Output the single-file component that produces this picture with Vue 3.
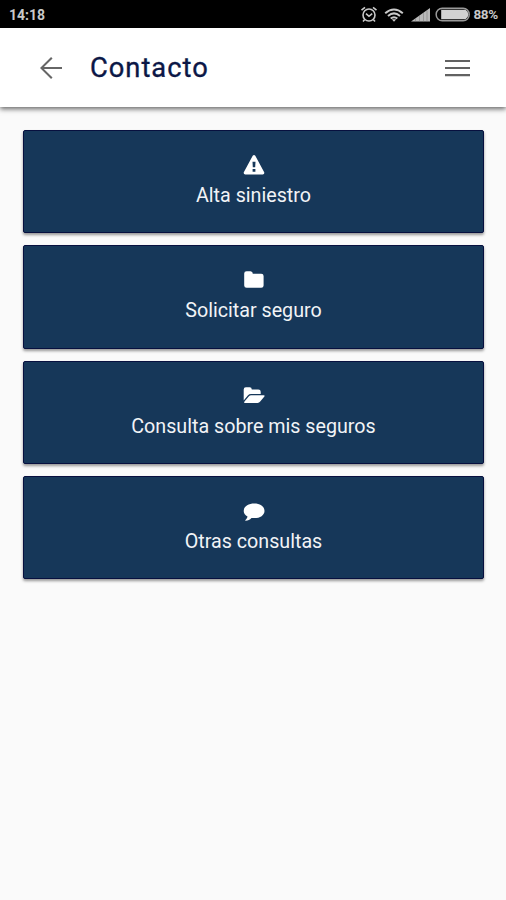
<template>
  <div class="screen">
    <div class="status-bar">
      <span class="clock">14:18</span>
      <div class="status-icons">
        <svg class="alarm" viewBox="0 0 18 18" fill="none" stroke="#c9c9c9" stroke-width="1.6">
          <circle cx="9" cy="9" r="6" />
          <path d="M1.5 4.2 5 1.3M16.5 4.2 13 1.3M6 7.7l3 2.6 3.2-2.6M4.7 13.5l-1.7 2M13.3 13.5l1.7 2" />
        </svg>
        <svg class="wifi" viewBox="0 0 20 14" fill="none" stroke="#c9c9c9" stroke-width="2">
          <path d="M1.2 5.2Q10-2.2 18.8 5.2M4 8Q10 2.8 16 8M6.7 10.6Q10 7.8 13.3 10.6" />
          <path d="M7.8 11.2h4.4L10 13.7z" fill="#c9c9c9" stroke="none" />
        </svg>
        <svg class="signal" viewBox="0 0 20 14">
          <path d="M0 13.5 19 0v13.5z" fill="#b9b9b9" />
          <path d="M4.5 10.5v3M8.5 8v5.5M12.5 5v8.5M16 2.5v11" stroke="#777" stroke-width=".5" />
        </svg>
        <svg class="battery" viewBox="0 0 36 15">
          <rect x="1.2" y="1.2" width="33" height="12.6" rx="6" fill="none" stroke="#999" stroke-width="1.5" />
          <path d="M6.2 2.8h24.3q2.8 1.5 2.8 4.7T30.5 12.2H6.2z" fill="#d2d2d2" />
        </svg>
        <span class="percent">88%</span>
      </div>
    </div>

    <header class="toolbar">
      <svg class="back" viewBox="0 0 22 22" fill="none" stroke="#666" stroke-width="2.1">
        <path d="M22 11H1.8M11.8 .8 1.4 11l10.4 10.2" />
      </svg>
      <h1>Contacto</h1>
      <svg class="menu" viewBox="0 0 25 18" stroke="#626262" stroke-width="2.2">
        <path d="M0 2h25M0 9h25M0 16.2h25" />
      </svg>
    </header>

    <main class="options">
      <button v-for="option in options" :key="option.label" class="option">
        <svg class="option-icon" viewBox="0 0 22 20" fill="#fff" fill-rule="evenodd">
          <path v-for="d in option.paths" :key="d" :d="d" />
        </svg>
        <span>{{ option.label }}</span>
      </button>
    </main>
  </div>
</template>

<script setup>
const options = [
  {
    label: 'Alta siniestro',
    paths: [
      'M9.7.8Q11-.6 12.3.8L21.2 17.2Q21.8 19.3 19.7 19.4H2.3Q.2 19.3.8 17.2ZM9.5 6.8 9.8 12.3H12.2L12.5 6.8ZM9.6 14V16.7H12.4V14Z',
    ],
  },
  {
    label: 'Solicitar seguro',
    paths: [
      'M1.2 3.6Q1.2 1.2 3.6 1.2H7.5Q9.8 1.2 9.8 3.7H18.2Q20.6 3.7 20.6 6.1V15.4Q20.6 17.8 18.2 17.8H3.6Q1.2 17.8 1.2 15.4Z',
    ],
  },
  {
    label: 'Consulta sobre mis seguros',
    paths: [
      'M.7 3.5Q.7 1.3 2.9 1.3H6.7Q8.7 1.3 8.8 3.4H15.3Q17.7 3.4 17.7 5.7V8.1H8.1Q6.1 8.1 4.8 9.5L.7 14.4Z',
      'M8.2 9.2H20.5Q22.3 9.2 21.4 10.6L17.2 15.6Q16.2 16.9 14.6 16.9H2.1Q.6 16.9 1.5 15.6L5.7 10.5Q6.8 9.2 8.2 9.2Z',
    ],
  },
  {
    label: 'Otras consultas',
    paths: [
      'M11.3 2.6C17.2 2.6 21.5 5.8 21.5 9.9S17.2 17.1 11.3 17.1Q9.8 17.1 8.5 16.9C6.8 18.6 5 19.5 2.7 19.8Q1.9 19.6 2.5 18.9C3.8 17.6 4.2 16.9 4.5 15.4C2.3 14.1.7 12.2.7 9.9C.7 5.8 5.4 2.6 11.3 2.6Z',
    ],
  },
]
</script>

<style>
body { background: #fafafa; }
</style>

<style scoped>
.screen {
  min-height: 900px;
  background: #fafafa;
  font-family: Roboto, sans-serif;
}
.status-bar {
  display: flex; align-items: center; justify-content: space-between;
  box-sizing: border-box;
  height: 28px;
  padding: 1px 8px 0 9px;
  background: #000;
  color: #c9c9c9;
  font-size: 14px; font-weight: 700;
}
.status-icons { display: flex; align-items: center; }
.alarm { width: 18px; height: 18px; margin-right: 6px; }
.wifi { width: 20px; height: 14px; margin-right: 7px; }
.signal { width: 20px; height: 14px; margin-right: 4px; }
.battery { width: 36px; height: 15px; margin-right: 2px; }
.percent { font-size: 13.5px; line-height: 15px; letter-spacing: -0.3px; }
.toolbar {
  position: relative;
  display: flex; align-items: center;
  box-sizing: border-box;
  height: 79px;
  padding: 1px 36px 0 40px;
  background: #fff;
  box-shadow: 0 2px 5px rgba(0,0,0,0.6);
}
.back { width: 22px; height: 22px; }
.toolbar h1 {
  flex: 1;
  margin: 0 0 0 28px;
  color: #0b1746;
  font-size: 27.3px; font-weight: 400; letter-spacing: 1px;
  -webkit-text-stroke: 0.35px #0b1746;
}
.menu { width: 25px; height: 18px; }
.options {
  display: flex; flex-direction: column; gap: 12px;
  padding: 23px 22px 0 23px;
}
.option {
  display: flex; flex-direction: column; align-items: center;
  box-sizing: border-box;
  height: 103.3px;
  padding: 24px 0 0;
  border: 1px solid #07103f; border-radius: 2px;
  background: #163759;
  box-shadow: 0 2px 3px rgba(0,0,0,0.4);
  color: #f1f3f6;
  font: 400 19.7px/24px Roboto, sans-serif;
}
.option-icon { width: 22px; height: 20px; margin-bottom: 9px; }
</style>
